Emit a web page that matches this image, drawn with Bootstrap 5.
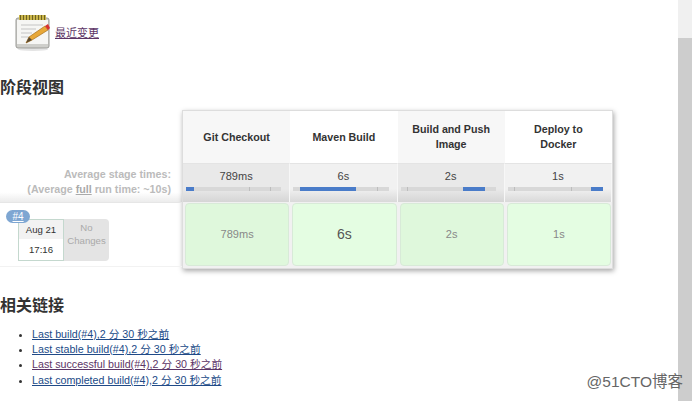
<!DOCTYPE html>
<html lang="zh-CN">

<head>
  <meta charset="UTF-8">
  <meta name="viewport" content="width=device-width, initial-scale=1.0">
  <title>阶段视图</title>
  <link rel="stylesheet" href="https://cdn.jsdelivr.net/npm/bootstrap@5.3.0/dist/css/bootstrap.min.css">
  <style>
    html, body { height: 401px; overflow: hidden; }
    body { font-family: "Liberation Sans", "Noto Sans CJK SC", sans-serif; font-size: 10.7px; color: #333; background: #fff; }
    a { color: #204a87; }
    a.seen { color: #5c3566; }
    .page-wrap { width: 692px; height: 401px; position: relative; }
    .page-main { width: 678px; }
    .scroll-track { width: 14px; background: #f0f0f0; }
    .scroll-thumb { margin-top: 38px; height: 363px; background: #cdcdcd; }
    .recent-row { height: 51px; padding: 14px 0 0 15px; }
    .recent-row svg { width: 36px; height: 37px; margin-right: 4px; }
    .recent-row a { font-size: 11px; margin-bottom: 10px; }
    .sec-title { font-size: 16px; font-weight: 700; line-height: 20px; margin: 0; color: #333; }
    .first-title { margin-top: 27px; }
    .stage-area { height: 159px; margin-top: 12px; position: relative; }
    .left-col { width: 182px; }
    .head-gap { height: 53px; }
    .avg-label { height: 39px; padding: 4px 11px 0 0; text-align: right; color: #bbb; font-weight: 700; font-size: 10.7px; line-height: 15px; background: linear-gradient(to bottom, #fff 0, #fff 75%, #ececec 100%); }
    .avg-label u { color: #aaa; }
    .build-row { height: 65px; position: relative; border-top: 1px solid #e6e6e6; border-bottom: 1px solid #f2f2f2; }
    .build-tag { position: absolute; left: 6px; top: 7px; background: #7ea6d2; color: #fff; border-radius: 8px; font-size: 10px; line-height: 13px; padding: 0 6.5px; height: 13px; z-index: 2; }
    .build-tag a { color: #fff; }
    .date-box { margin: 16px 0 0 18px; width: 46px; height: 42px; background: #fff; border: 1px solid #c4d8ce; text-align: center; font-size: 9.6px; color: #333; z-index: 1; }
    .date-top { height: 19px; line-height: 19px; background: #f2f2f2; }
    .date-low { line-height: 22px; }
    .change-box { margin-top: 16px; width: 45px; height: 42px; background: #e4e4e4; border-radius: 0 4px 4px 0; color: #aaa; text-align: center; font-size: 9.6px; line-height: 12.5px; padding-top: 3px; }
    .stage-grid { width: 431px; height: 159px; border: 1px solid #ddd; box-shadow: 1px 2px 5px rgba(0, 0, 0, .35); background: #fff; }
    .stage-col { flex: 1 1 0; min-width: 0; }
    .stage-head { height: 52px; padding: 0 8px; font-weight: 700; font-size: 10.7px; line-height: 15px; text-align: center; color: #333; background: #fff; }
    .stage-col.shade .stage-head { background: #f7f7f7; }
    .stage-avg { height: 39px; background: linear-gradient(to bottom, #f1f1f1 0, #f1f1f1 65%, #d9d9d9 100%); border-top: 1px solid #e4e4e4; border-right: 1px solid #f7f7f7; text-align: center; font-size: 11px; color: #444; padding-top: 5px; line-height: 15px; }
    .stage-col.shade .stage-avg { background: linear-gradient(to bottom, #e9e9e9 0, #e9e9e9 65%, #d5d5d5 100%); }
    .time-bar { height: 4px; margin: 3px 8px 0 3px; background: #d8d8d8; position: relative; }
    .time-fill { position: absolute; top: 0; bottom: 0; background: #4a7cc9; }
    .time-tick { position: absolute; top: 0; bottom: 0; width: 1px; background: #bdbdbd; }
    .stage-cell { height: 66px; padding: 1px 1px 2px 2px; background: #f1f1f1; }
    .cell-inner { height: 100%; border: 1px solid #d8ead8; border-radius: 4px; background: #e4fde2; color: #888; font-size: 11px; }
    .stage-col.shade .cell-inner { background: #dff8dc; }
    .cell-inner.big { font-size: 14px; color: #555; }
    .links-block { margin-top: 27px; }
    .links-list { margin: 11px 0 0 0; padding: 0 0 0 32px; font-size: 10.7px; line-height: 15.2px; }
    .watermark { position: absolute; right: 9px; bottom: 10px; font-size: 15.5px; line-height: 18px; color: #666; }
  </style>
</head>

<body>
  <div class="page-wrap d-flex">
    <div class="page-main">
      <div class="recent-row d-flex align-items-end">
        <svg viewBox="0 0 36 37">
          <ellipse cx="18" cy="35.5" rx="15" ry="1.5" fill="#e4e4e4" />
          <rect x="1" y="4" width="33" height="30" rx="2" fill="#cfcfcb" stroke="#9a9a96" stroke-width="1" />
          <rect x="2" y="6" width="31" height="24" fill="#f6f6f4" />
          <rect x="4" y="1" width="27" height="5" fill="#c8b44a" />
          <path d="M5.5 1v5M8.5 1v5M11.5 1v5M14.5 1v5M17.5 1v5M20.5 1v5M23.5 1v5M26.5 1v5M29.5 1v5" stroke="#6e6222" stroke-width="1" />
          <path d="M6 11h22M6 15h15M6 19h11M6 23h8" stroke="#c4c4c4" stroke-width="1" />
          <path d="M11 29l3-6L30 12l3 4-16 10z" fill="#e8a838" stroke="#a8701c" stroke-width=".7" />
          <path d="M11 29l3-6 3 3z" fill="#5a4a30" />
          <path d="M30 12l3 4 2-2-2-4z" fill="#d83030" />
        </svg>
        <a href="#" class="seen">最近变更</a>
      </div>
      <h2 class="sec-title first-title">阶段视图</h2>
      <div class="stage-area d-flex">
        <div class="left-col">
          <div class="head-gap"></div>
          <div class="avg-label">Average stage times:<br>(Average <u>full</u> run time: ~10s)</div>
          <div class="build-row d-flex">
            <span class="build-tag"><a href="#">#4</a></span>
            <div class="date-box">
              <div class="date-top">Aug 21</div>
              <div class="date-low">17:16</div>
            </div>
            <div class="change-box">No Changes</div>
          </div>
        </div>
        <div class="stage-grid d-flex">
          <div class="stage-col shade">
            <div class="stage-head d-flex align-items-center justify-content-center">Git Checkout</div>
            <div class="stage-avg">789ms
              <div class="time-bar"><span class="time-fill" style="left:0;width:8%"></span><span class="time-tick" style="left:66%"></span><span class="time-tick" style="left:88%"></span></div>
            </div>
            <div class="stage-cell"><div class="cell-inner d-flex align-items-center justify-content-center">789ms</div></div>
          </div>
          <div class="stage-col">
            <div class="stage-head d-flex align-items-center justify-content-center">Maven Build</div>
            <div class="stage-avg">6s
              <div class="time-bar"><span class="time-fill" style="left:7%;width:59%"></span><span class="time-tick" style="left:88%"></span></div>
            </div>
            <div class="stage-cell"><div class="cell-inner big d-flex align-items-center justify-content-center">6s</div></div>
          </div>
          <div class="stage-col shade">
            <div class="stage-head d-flex align-items-center justify-content-center">Build and Push<br>Image</div>
            <div class="stage-avg">2s
              <div class="time-bar"><span class="time-fill" style="left:66%;width:23%"></span><span class="time-tick" style="left:7%"></span></div>
            </div>
            <div class="stage-cell"><div class="cell-inner d-flex align-items-center justify-content-center">2s</div></div>
          </div>
          <div class="stage-col">
            <div class="stage-head d-flex align-items-center justify-content-center">Deploy to<br>Docker</div>
            <div class="stage-avg">1s
              <div class="time-bar"><span class="time-fill" style="left:87%;width:13%"></span><span class="time-tick" style="left:7%"></span><span class="time-tick" style="left:66%"></span></div>
            </div>
            <div class="stage-cell"><div class="cell-inner d-flex align-items-center justify-content-center">1s</div></div>
          </div>
        </div>
      </div>
      <div class="links-block">
        <h2 class="sec-title">相关链接</h2>
        <ul class="links-list">
          <li><a href="#">Last build(#4),2 分 30 秒之前</a></li>
          <li><a href="#">Last stable build(#4),2 分 30 秒之前</a></li>
          <li><a href="#" class="seen">Last successful build(#4),2 分 30 秒之前</a></li>
          <li><a href="#">Last completed build(#4),2 分 30 秒之前</a></li>
        </ul>
      </div>
    </div>
    <div class="scroll-track"><div class="scroll-thumb"></div></div>
    <div class="watermark">@51CTO博客</div>
  </div>
  <script src="https://cdn.jsdelivr.net/npm/bootstrap@5.3.0/dist/js/bootstrap.bundle.min.js"></script>
</body>

</html>
